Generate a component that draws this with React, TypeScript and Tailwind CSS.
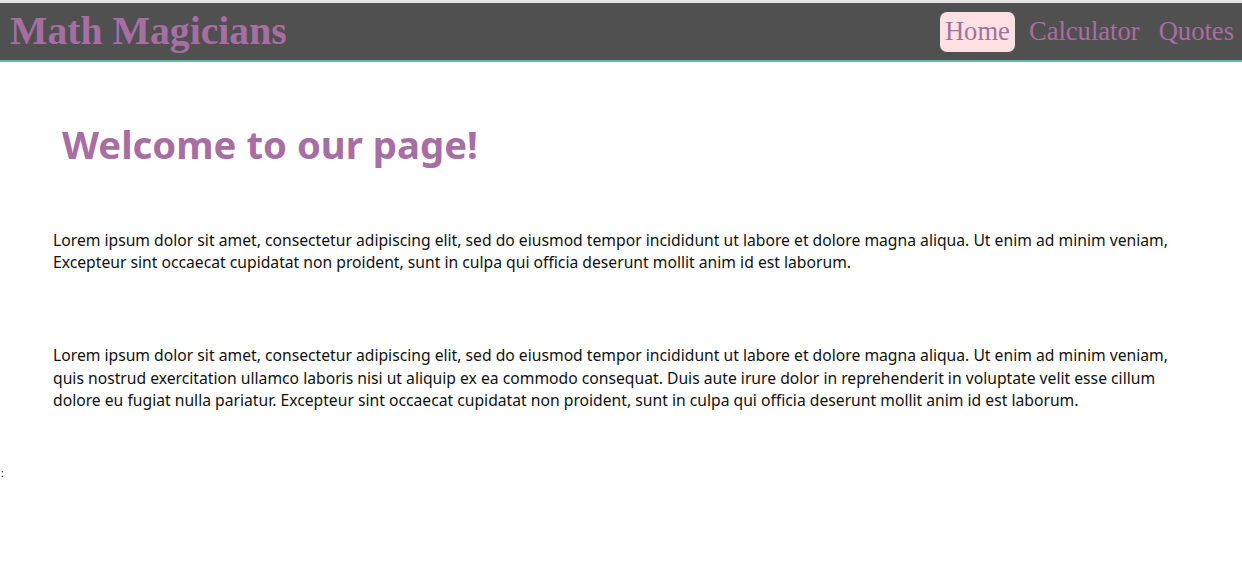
const NAV = ["Home", "Calculator", "Quotes"];

const Header = () => {
  return (
    <header className="border-t-[3px] border-[#e4e4e4] bg-[#505050] border-b-2 border-b-[#5fb8ad]">
      <div className="h-[57px] flex items-center justify-between pl-[10px] pr-[3px]">
        <h1 className="font-['Liberation_Serif',serif] font-bold text-[39.7px] leading-none text-[#a66ea2]">
          Math Magicians
        </h1>
        <nav className="flex items-center gap-[9px] font-['Liberation_Serif',serif] text-[26.6px] text-[#a66ea2]">
          {NAV.map((item) => (
            <a
              key={item}
              href="#"
              className={`px-[5px] h-[40px] flex items-center rounded-[7px] ${
                item === "Home" ? "bg-[#ffe0e3] text-[#a0739c] ml-[2px]" : ""
              }`}
            >
              {item}
            </a>
          ))}
        </nav>
      </div>
    </header>
  );
};

const App = () => {
  return (
    <div className="min-h-[587px] bg-white font-['Noto_Sans',sans-serif] relative">
      <Header />
      <main className="px-[53px]">
        <h2 className="pt-[63px] pl-[9px] font-bold text-[38.3px] leading-none text-[#a66ea2]">
          Welcome to our page!
        </h2>
        <p className="mt-[66px] text-[15.7px] leading-[22px] text-[#111]">
          Lorem ipsum dolor sit amet, consectetur adipiscing elit, sed do eiusmod tempor incididunt ut labore et dolore
          magna aliqua. Ut enim ad minim veniam,
          <br />
          Excepteur sint occaecat cupidatat non proident, sunt in culpa qui officia deserunt mollit anim id est laborum.
        </p>
        <p className="mt-[71px] text-[15.7px] leading-[22.5px] text-[#111]">
          Lorem ipsum dolor sit amet, consectetur adipiscing elit, sed do eiusmod tempor incididunt ut labore et dolore
          magna aliqua. Ut enim ad minim veniam,
          <br />
          quis nostrud exercitation ullamco laboris nisi ut aliquip ex ea commodo consequat. Duis aute irure dolor in
          reprehenderit in voluptate velit esse cillum
          <br />
          dolore eu fugiat nulla pariatur. Excepteur sint occaecat cupidatat non proident, sunt in culpa qui officia
          deserunt mollit anim id est laborum.
        </p>
      </main>
      <p className="mt-[56px] pl-[1px] text-[10px] leading-none text-black">:</p>
    </div>
  );
};

export default App;
